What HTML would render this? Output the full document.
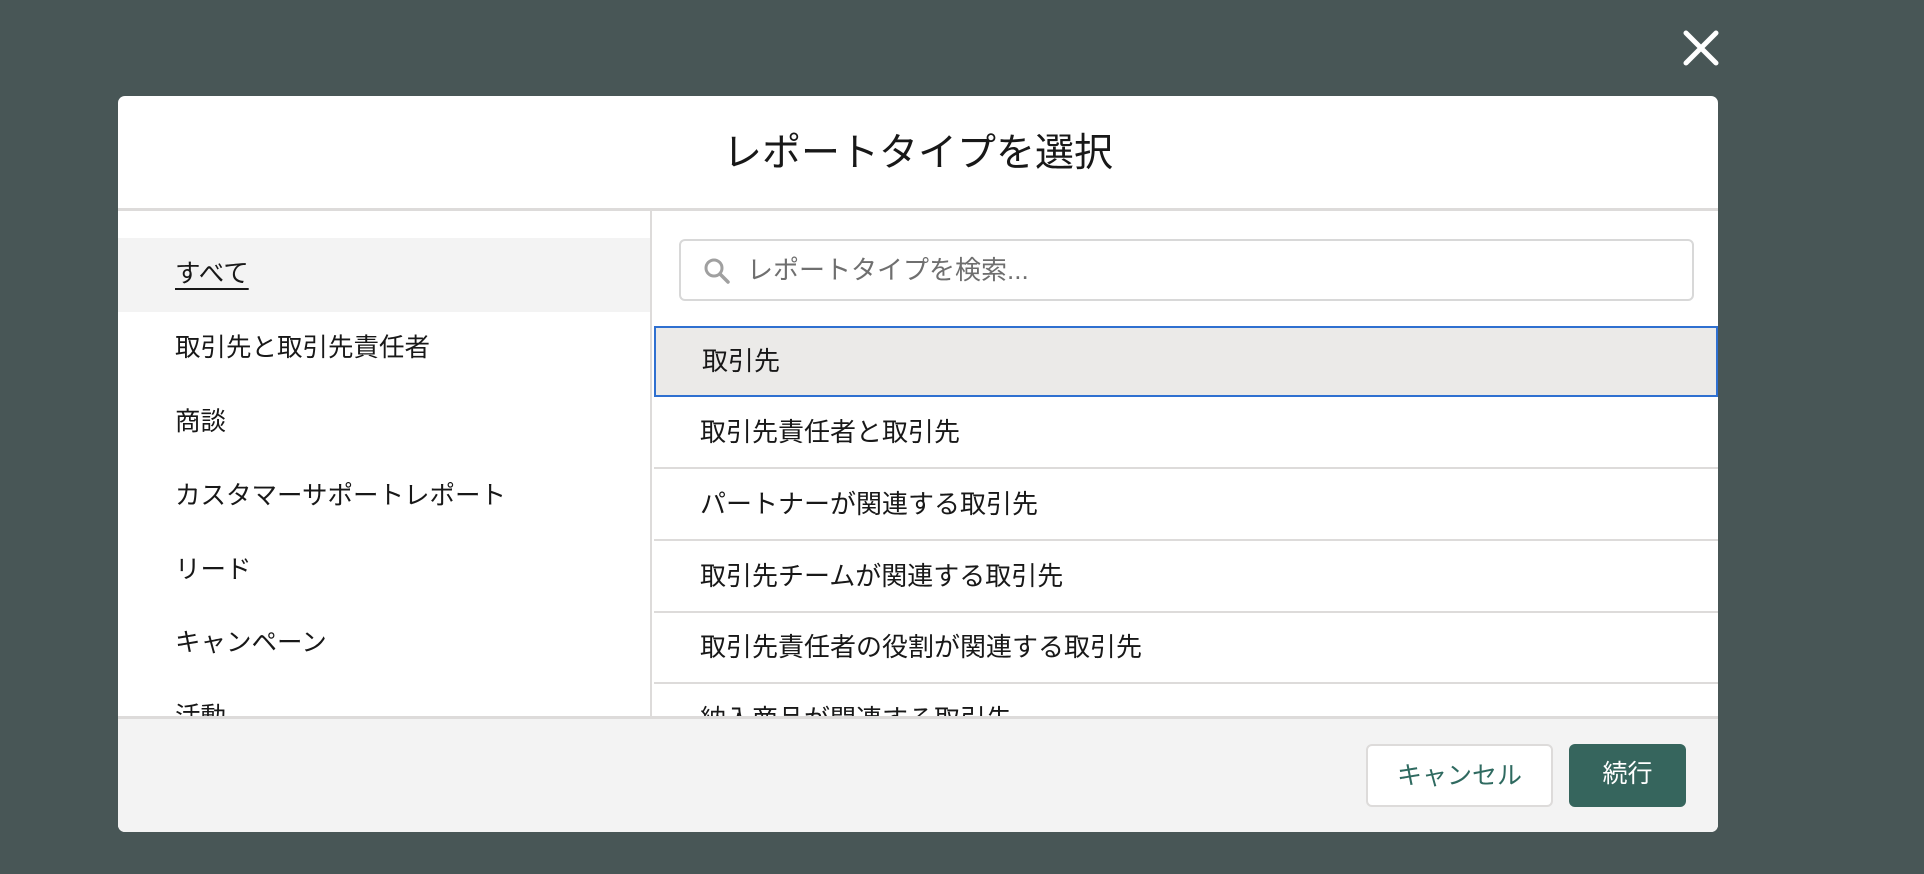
<!DOCTYPE html>
<html><head><meta charset="utf-8"><style>
*{box-sizing:border-box;margin:0;padding:0}
body{width:1924px;height:874px;background:#485656;font-family:"Liberation Sans","Noto Sans CJK JP",sans-serif;position:relative;overflow:hidden;color:#181818}
.close{position:absolute;left:1683px;top:30px;width:36px;height:36px}
.modal{position:absolute;left:118px;top:96px;width:1600px;height:736px;background:#fff;border-radius:7px;overflow:hidden}
.hdr{height:115px;border-bottom:3px solid #dddbda;text-align:center;font-size:39px;line-height:115px;color:#181818}
.left{position:absolute;left:0;top:115px;width:534px;height:505px;border-right:2px solid #dddbda;overflow:hidden}
.left .it{position:absolute;left:57px;font-size:25.5px;height:74px;line-height:74px}
.sel{position:absolute;left:0;top:27px;width:532px;height:74px;background:#f3f3f3}
.right{position:absolute;left:536px;top:115px;width:1064px;height:505px;overflow:hidden}
.search{position:absolute;left:25px;top:28px;width:1015px;height:62px;border:2px solid #d8d8d8;border-radius:6px;font-size:26px;color:#6f6f6f;line-height:58px;padding-left:66px}
.search svg{position:absolute;left:22px;top:16px}
.row{position:absolute;left:0;width:1064px;height:72px;border-bottom:2px solid #dddbda;font-size:26px;line-height:70px;padding-left:46px}
.foot{position:absolute;left:0;top:620px;width:1600px;height:116px;background:#f3f3f3;border-top:3px solid #dddbda}
.btn{position:absolute;top:25px;height:63px;border-radius:6px;font-size:25px;line-height:61px;text-align:center}
</style></head><body>
<svg class="close" viewBox="0 0 36 36"><path d="M3 3L33 33M33 3L3 33" stroke="#fff" stroke-width="5" stroke-linecap="round"/></svg>
<div class="modal">
<div class="hdr">レポートタイプを選択</div>
<div class="left">
<div class="sel"></div>
<div class="it" style="top:26px;text-decoration:underline;text-underline-offset:6px">すべて</div>
<div class="it" style="top:100px">取引先と取引先責任者</div>
<div class="it" style="top:174px">商談</div>
<div class="it" style="top:248px">カスタマーサポートレポート</div>
<div class="it" style="top:322px">リード</div>
<div class="it" style="top:395px">キャンペーン</div>
<div class="it" style="top:469px">活動</div>
</div>
<div class="right">
<div class="search"><svg width="28" height="28" viewBox="0 0 28 28"><circle cx="11" cy="11" r="8" fill="none" stroke="#a0a0a0" stroke-width="3"/><path d="M17 17L25 25" stroke="#a0a0a0" stroke-width="3.5" stroke-linecap="round"/></svg>レポートタイプを検索...</div>
<div class="row" style="top:115px;height:71px;background:#ebeae8;border:2px solid #2f70d0;line-height:67px">取引先</div>
<div class="row" style="top:186px">取引先責任者と取引先</div>
<div class="row" style="top:258px">パートナーが関連する取引先</div>
<div class="row" style="top:330px">取引先チームが関連する取引先</div>
<div class="row" style="top:401px">取引先責任者の役割が関連する取引先</div>
<div class="row" style="top:473px">納入商品が関連する取引先</div>
</div>
<div class="foot">
<div class="btn" style="left:1248px;width:187px;background:#fff;border:2px solid #dddbda;color:#2f6a60">キャンセル</div>
<div class="btn" style="left:1451px;width:117px;background:#36655d;color:#fff">続行</div>
</div>
</div>
</body></html>
